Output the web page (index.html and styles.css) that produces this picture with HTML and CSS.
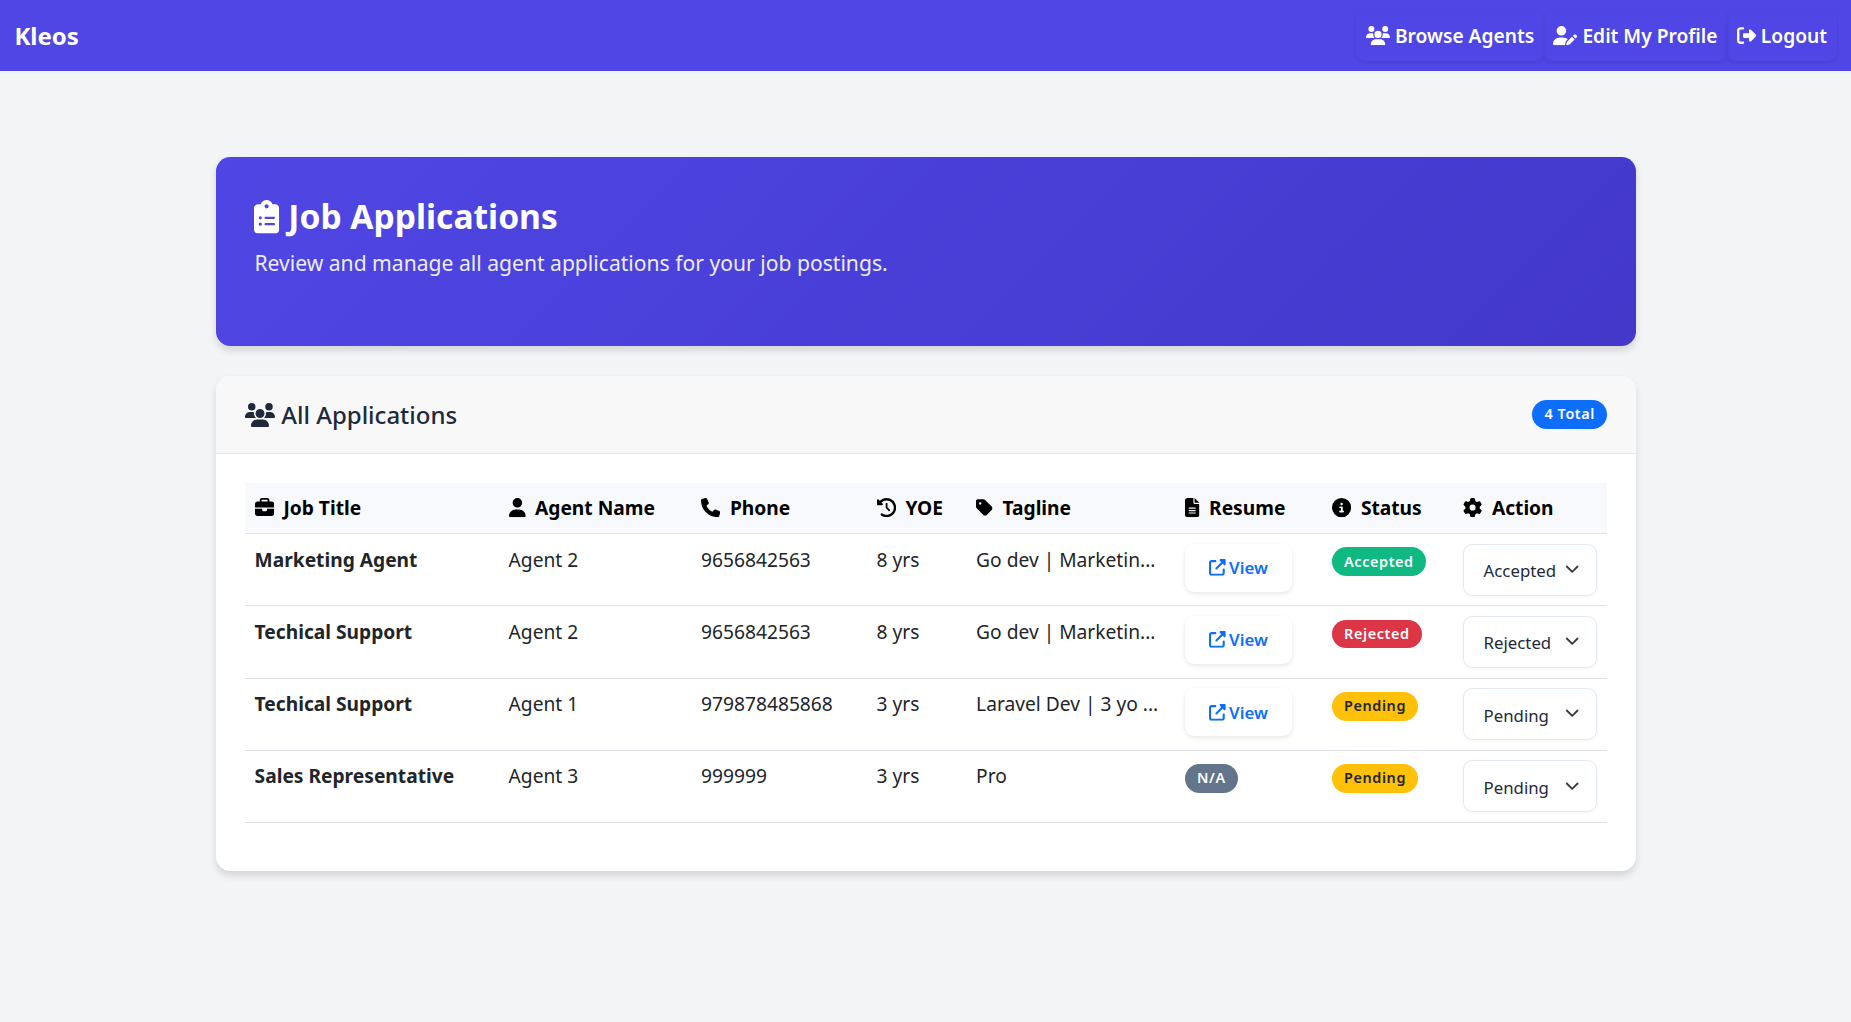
FILE: index.html
```html
<!DOCTYPE html>
<html lang="en">
<head>
<meta charset="utf-8">
<title>Kleos – Job Applications</title>
<link rel="stylesheet" href="styles.css">
</head>
<body>
<svg class="sprite" aria-hidden="true">
  <symbol id="users" viewBox="0 0 640 512"><path d="M144 0a80 80 0 1 1 0 160A80 80 0 1 1 144 0zM512 0a80 80 0 1 1 0 160A80 80 0 1 1 512 0zM0 298.700C0 239.800 47.800 192 106.700 192h42.700c15.900 0 31 3.500 44.600 9.700c-1.300 7.200-1.900 14.700-1.900 22.300c0 38.200 16.800 72.500 43.300 96c-.2 0-.4 0-.7 0H21.300C9.600 320 0 310.400 0 298.700zM405.300 320c-.2 0-.4 0-.7 0c26.600-23.500 43.300-57.800 43.300-96c0-7.600-.7-15-1.900-22.300c13.600-6.300 28.700-9.700 44.600-9.700h42.700C592.200 192 640 239.800 640 298.700c0 11.800-9.600 21.300-21.300 21.300H405.300zM224 224a96 96 0 1 1 192 0 96 96 0 1 1 -192 0zM128 485.300C128 411.700 187.700 352 261.300 352H378.700C452.300 352 512 411.700 512 485.300c0 14.700-11.900 26.700-26.700 26.700H154.700c-14.700 0-26.700-11.900-26.700-26.700z"/></symbol>
  <symbol id="user-pen" viewBox="0 0 640 512"><path d="M224 256A128 128 0 1 0 224 0a128 128 0 1 0 0 256zm-45.700 48C79.800 304 0 383.800 0 482.300C0 498.700 13.300 512 29.700 512H322.800c-3.100-8.800-3.700-18.400-1.400-27.800l15-60.100c2.800-11.300 8.600-21.500 16.800-29.700l40.300-40.300c-32.100-31-75.700-50.100-123.900-50.100H178.300zm435.500-68.300c-15.600-15.600-40.900-15.600-56.600 0l-29.400 29.400 71 71 29.400-29.400c15.600-15.600 15.600-40.900 0-56.600l-14.400-14.400zM375.900 417c-4.100 4.100-7 9.200-8.400 14.900l-15 60.100c-1.400 5.500 .2 11.200 4.200 15.200s9.700 5.600 15.200 4.200l60.100-15c5.600-1.400 10.800-4.300 14.900-8.400L576.100 358.700l-71-71L375.900 417z"/></symbol>
  <symbol id="logout" viewBox="0 0 512 512"><path d="M377.900 105.900L500.700 228.700c7.200 7.200 11.300 17.100 11.300 27.300s-4.100 20.100-11.300 27.300L377.900 406.100c-6.400 6.400-15 9.900-24 9.900c-18.700 0-33.900-15.200-33.900-33.900l0-62.100-128 0c-17.700 0-32-14.300-32-32l0-64c0-17.700 14.300-32 32-32l128 0 0-62.100c0-18.700 15.200-33.900 33.900-33.900c9 0 17.600 3.600 24 9.900zM160 96L96 96c-17.700 0-32 14.300-32 32l0 256c0 17.700 14.300 32 32 32l64 0c17.700 0 32 14.300 32 32s-14.300 32-32 32l-64 0c-53 0-96-43-96-96L0 128C0 75 43 32 96 32l64 0c17.700 0 32 14.300 32 32s-14.300 32-32 32z"/></symbol>
  <symbol id="clipboard" viewBox="0 0 384 512"><path d="M192 0c-41.800 0-77.400 26.700-90.500 64H64C28.700 64 0 92.700 0 128V448c0 35.300 28.700 64 64 64H320c35.300 0 64-28.700 64-64V128c0-35.300-28.700-64-64-64H282.500C269.400 26.700 233.800 0 192 0zm0 64a32 32 0 1 1 0 64 32 32 0 1 1 0-64zM72 272a24 24 0 1 1 48 0 24 24 0 1 1 -48 0zm104-16H304c8.800 0 16 7.200 16 16s-7.200 16-16 16H176c-8.800 0-16-7.200-16-16s7.200-16 16-16zM72 368a24 24 0 1 1 48 0 24 24 0 1 1 -48 0zm88 0c0-8.800 7.200-16 16-16H304c8.800 0 16 7.200 16 16s-7.200 16-16 16H176c-8.800 0-16-7.200-16-16z"/></symbol>
  <symbol id="briefcase" viewBox="0 0 512 512"><path d="M184 48H328c4.400 0 8 3.600 8 8V96H176V56c0-4.400 3.600-8 8-8zm-56 8V96H64C28.700 96 0 124.700 0 160v96H192 320 512V160c0-35.300-28.700-64-64-64H384V56c0-30.900-25.100-56-56-56H184c-30.900 0-56 25.100-56 56zM512 288H320v32c0 17.700-14.300 32-32 32H224c-17.700 0-32-14.300-32-32V288H0V416c0 35.300 28.700 64 64 64H448c35.300 0 64-28.700 64-64V288z"/></symbol>
  <symbol id="user" viewBox="0 0 448 512"><path d="M224 256A128 128 0 1 0 224 0a128 128 0 1 0 0 256zm-45.700 48C79.800 304 0 383.800 0 482.300C0 498.700 13.300 512 29.700 512H418.300c16.400 0 29.700-13.300 29.700-29.700C448 383.800 368.200 304 269.700 304H178.300z"/></symbol>
  <symbol id="phone" viewBox="0 0 512 512"><path d="M164.900 24.600c-7.700-18.600-28-28.500-47.400-23.200l-88 24C12.100 30.200 0 46 0 64C0 311.400 200.600 512 448 512c18 0 33.800-12.100 38.600-29.500l24-88c5.300-19.400-4.600-39.700-23.200-47.400l-96-40c-16.300-6.800-35.200-2.100-46.300 11.600L304.700 368C234.300 334.700 177.300 277.700 144 207.300L193.300 167c13.700-11.200 18.400-30 11.600-46.300l-40-96z"/></symbol>
  <symbol id="history" viewBox="0 0 512 512"><path d="M75 75L41 41C25.900 25.900 0 36.600 0 57.900V168c0 13.300 10.700 24 24 24H134.100c21.400 0 32.100-25.900 17-41l-30.800-30.800C155 85.500 203 64 256 64c106 0 192 86 192 192s-86 192-192 192c-40.800 0-78.600-12.700-109.700-34.400c-14.500-10.100-34.400-6.600-44.600 7.900s-6.600 34.400 7.900 44.600C151.200 495 201.700 512 256 512c141.400 0 256-114.600 256-256S397.400 0 256 0C185.300 0 121.300 28.700 75 75zm181 53c-13.300 0-24 10.700-24 24V256c0 6.400 2.500 12.500 7 17l72 72c9.400 9.400 24.600 9.400 33.900 0s9.400-24.600 0-33.900l-65-65V152c0-13.300-10.700-24-24-24z"/></symbol>
  <symbol id="tag" viewBox="0 0 448 512"><path d="M0 80V229.500c0 17 6.700 33.300 18.700 45.300l176 176c25 25 65.500 25 90.500 0L418.700 317.300c25-25 25-65.500 0-90.500l-176-176c-12-12-28.300-18.700-45.300-18.700H48C21.500 32 0 53.500 0 80zm112 32a32 32 0 1 1 0 64 32 32 0 1 1 0-64z"/></symbol>
  <symbol id="file" viewBox="0 0 384 512"><path d="M64 0C28.700 0 0 28.700 0 64V448c0 35.300 28.700 64 64 64H320c35.300 0 64-28.700 64-64V160H256c-17.700 0-32-14.300-32-32V0H64zM256 0V128H384L256 0zM112 256H272c8.800 0 16 7.200 16 16s-7.200 16-16 16H112c-8.800 0-16-7.200-16-16s7.200-16 16-16zm0 64H272c8.800 0 16 7.200 16 16s-7.200 16-16 16H112c-8.800 0-16-7.200-16-16s7.200-16 16-16zm0 64H272c8.800 0 16 7.200 16 16s-7.200 16-16 16H112c-8.800 0-16-7.200-16-16s7.200-16 16-16z"/></symbol>
  <symbol id="info" viewBox="0 0 512 512"><path d="M256 512A256 256 0 1 0 256 0a256 256 0 1 0 0 512zM216 336h24V272H216c-13.300 0-24-10.700-24-24s10.700-24 24-24h48c13.300 0 24 10.700 24 24v88h8c13.300 0 24 10.700 24 24s-10.700 24-24 24H216c-13.300 0-24-10.700-24-24s10.700-24 24-24zm40-208a32 32 0 1 1 0 64 32 32 0 1 1 0-64z"/></symbol>
  <symbol id="gear" viewBox="0 0 512 512"><path d="M495.900 166.600c3.200 8.700 .5 18.400-6.400 24.600l-43.300 39.400c1.100 8.300 1.700 16.800 1.700 25.400s-.6 17.100-1.700 25.400l43.300 39.400c6.900 6.200 9.600 15.900 6.400 24.600c-4.400 11.900-9.700 23.300-15.800 34.300l-4.700 8.100c-6.600 11-14 21.400-22.100 31.200c-5.900 7.200-15.700 9.600-24.500 6.800l-55.700-17.700c-13.400 10.300-28.200 18.900-44 25.400l-12.500 57.100c-2 9.100-9 16.300-18.200 17.800c-13.800 2.300-28 3.500-42.500 3.500s-28.700-1.200-42.500-3.500c-9.200-1.500-16.200-8.700-18.200-17.800l-12.500-57.100c-15.800-6.500-30.600-15.100-44-25.400L83.100 425.900c-8.800 2.800-18.600 .3-24.500-6.800c-8.100-9.800-15.500-20.200-22.100-31.200l-4.700-8.100c-6.100-11-11.400-22.400-15.800-34.300c-3.200-8.700-.5-18.400 6.400-24.600l43.300-39.400C64.600 273.100 64 264.600 64 256s.6-17.100 1.700-25.400L22.400 191.200c-6.900-6.200-9.600-15.900-6.400-24.600c4.400-11.900 9.700-23.300 15.800-34.300l4.700-8.100c6.600-11 14-21.400 22.100-31.200c5.900-7.200 15.700-9.600 24.500-6.800l55.700 17.700c13.400-10.300 28.200-18.900 44-25.400l12.500-57.100c2-9.100 9-16.300 18.200-17.800C227.300 1.200 241.500 0 256 0s28.700 1.200 42.500 3.500c9.200 1.500 16.200 8.700 18.200 17.800l12.500 57.100c15.800 6.500 30.600 15.100 44 25.400l55.700-17.700c8.800-2.800 18.600-.3 24.500 6.800c8.100 9.800 15.500 20.200 22.100 31.200l4.700 8.100c6.100 11 11.400 22.400 15.800 34.300zM256 336a80 80 0 1 0 0-160 80 80 0 1 0 0 160z"/></symbol>
  <symbol id="external" viewBox="0 0 512 512"><path d="M352 0c-12.900 0-24.600 7.800-29.600 19.800s-2.200 25.700 6.900 34.900L370.700 96 201.400 265.400c-12.500 12.500-12.500 32.800 0 45.300s32.800 12.500 45.300 0L416 141.300l41.400 41.400c9.200 9.200 22.900 11.900 34.900 6.900s19.800-16.600 19.800-29.600V32c0-17.700-14.300-32-32-32H352zM80 32C35.800 32 0 67.800 0 112V432c0 44.200 35.800 80 80 80H400c44.200 0 80-35.800 80-80V320c0-17.700-14.300-32-32-32s-32 14.300-32 32V432c0 8.800-7.200 16-16 16H80c-8.800 0-16-7.200-16-16V112c0-8.800 7.200-16 16-16H192c17.700 0 32-14.300 32-32s-14.300-32-32-32H80z"/></symbol>
  <symbol id="chevron" viewBox="0 0 16 16"><path fill="none" stroke="#343a40" stroke-linecap="round" stroke-linejoin="round" stroke-width="2" d="m2 5 6 6 6-6"/></symbol>
</svg>

<nav class="navbar">
  <a class="brand">Kleos</a>
  <div class="nav-links">
    <a class="nav-btn"><svg class="icon w-640"><use href="#users"/></svg> Browse Agents</a>
    <a class="nav-btn"><svg class="icon w-640"><use href="#user-pen"/></svg> Edit My Profile</a>
    <a class="nav-btn"><svg class="icon"><use href="#logout"/></svg> Logout</a>
  </div>
</nav>

<main class="container">
  <section class="hero">
    <h1><svg class="icon w-384"><use href="#clipboard"/></svg> Job Applications</h1>
    <p>Review and manage all agent applications for your job postings.</p>
  </section>

  <section class="card">
    <header class="card-header">
      <h2><svg class="icon w-640"><use href="#users"/></svg> All Applications</h2>
      <span class="badge badge-primary">4 Total</span>
    </header>
    <div class="card-body">
      <table class="table">
        <colgroup>
          <col class="c-job"><col class="c-agent"><col class="c-phone"><col class="c-yoe"><col class="c-tag"><col class="c-resume"><col class="c-status"><col class="c-action">
        </colgroup>
        <thead>
          <tr>
            <th><svg class="icon"><use href="#briefcase"/></svg>Job Title</th>
            <th><svg class="icon w-448"><use href="#user"/></svg>Agent Name</th>
            <th><svg class="icon"><use href="#phone"/></svg>Phone</th>
            <th><svg class="icon"><use href="#history"/></svg>YOE</th>
            <th><svg class="icon w-448"><use href="#tag"/></svg>Tagline</th>
            <th><svg class="icon w-384"><use href="#file"/></svg>Resume</th>
            <th><svg class="icon"><use href="#info"/></svg>Status</th>
            <th><svg class="icon"><use href="#gear"/></svg>Action</th>
          </tr>
        </thead>
        <tbody>
          <tr>
            <td class="job">Marketing Agent</td><td>Agent 2</td><td>9656842563</td><td>8 yrs</td><td>Go dev | Marketin...</td>
            <td><a class="view-btn"><svg class="icon"><use href="#external"/></svg> View</a></td>
            <td><span class="badge badge-success">Accepted</span></td>
            <td><div class="select">Accepted<svg class="chevron"><use href="#chevron"/></svg></div></td>
          </tr>
          <tr>
            <td class="job">Techical Support</td><td>Agent 2</td><td>9656842563</td><td>8 yrs</td><td>Go dev | Marketin...</td>
            <td><a class="view-btn"><svg class="icon"><use href="#external"/></svg> View</a></td>
            <td><span class="badge badge-danger">Rejected</span></td>
            <td><div class="select">Rejected<svg class="chevron"><use href="#chevron"/></svg></div></td>
          </tr>
          <tr>
            <td class="job">Techical Support</td><td>Agent 1</td><td>979878485868</td><td>3 yrs</td><td>Laravel Dev | 3 yo ...</td>
            <td><a class="view-btn"><svg class="icon"><use href="#external"/></svg> View</a></td>
            <td><span class="badge badge-warning">Pending</span></td>
            <td><div class="select">Pending<svg class="chevron"><use href="#chevron"/></svg></div></td>
          </tr>
          <tr>
            <td class="job">Sales Representative</td><td>Agent 3</td><td>999999</td><td>3 yrs</td><td>Pro</td>
            <td><span class="badge badge-secondary">N/A</span></td>
            <td><span class="badge badge-warning">Pending</span></td>
            <td><div class="select">Pending<svg class="chevron"><use href="#chevron"/></svg></div></td>
          </tr>
        </tbody>
      </table>
    </div>
  </section>
</main>
</body>
</html>
```
FILE: styles.css
```css
*, *::before, *::after { box-sizing: border-box; }

body {
  margin: 0;
  min-height: 1022px;
  background: #f3f4f6;
  color: #212529;
  font: 400 19.2px/1.5 "Noto Sans", sans-serif;
}

.sprite { display: none; }

.icon {
  width: 1em;
  height: 1em;
  fill: currentColor;
  vertical-align: -0.125em;
  overflow: visible;
}
.w-640 { width: 1.25em; }
.w-448 { width: 0.875em; }
.w-384 { width: 0.75em; }

.navbar {
  display: flex;
  align-items: center;
  justify-content: space-between;
  height: 71px;
  padding: 0 14.4px;
  background: #4f46e5;
  color: #fff;
}
.brand { font-size: 24px; font-weight: 700; }
.nav-links { display: flex; }
.nav-btn {
  padding: 11.8px 9.6px 9.8px;
  border-radius: 9.6px;
  font-weight: 600;
  box-shadow: 0 2px 5px rgba(0, 0, 0, 0.08);
}

.container {
  width: 1420px;
  margin: 86px 0 0 216px;
}

.hero {
  height: 189px;
  padding: 39.4px 38.4px;
  border-radius: 14.4px;
  background: linear-gradient(135deg, #4f46e5, #4338ca);
  color: #fff;
  box-shadow: 0 4.8px 7.2px rgba(0, 0, 0, 0.12);
}
.hero h1 { margin: 0 0 9.6px; font-size: 33.6px; font-weight: 700; line-height: 1.2; }
.hero p { margin: 0; font-size: 21.12px; line-height: 33px; opacity: 0.9; }

.card {
  height: 495px;
  margin-top: 30px;
  border-radius: 14.4px;
  background: #fff;
  overflow: hidden;
  box-shadow: 0 4.8px 7.2px rgba(0, 0, 0, 0.12);
}
.card-header {
  display: flex;
  align-items: center;
  justify-content: space-between;
  height: 78px;
  padding: 0 29px;
  border-bottom: 1px solid #e2e8f0;
  background: #f8f8f8;
  color: #1e293b;
}
.card-header h2 { margin: 0; padding-top: 2px; font-size: 24px; font-weight: 500; line-height: 1.2; }
.card-body { padding: 29px; }

.table {
  width: 1362px;
  border-collapse: separate;
  border-spacing: 0;
  table-layout: fixed;
}
.c-job { width: 254px; }
.c-agent { width: 192.500px; }
.c-phone { width: 175.500px; }
.c-yoe { width: 99.500px; }
.c-tag { width: 209px; }
.c-resume { width: 147px; }
.c-status { width: 131px; }
.c-action { width: 153.500px; }

th, td {
  padding: 9.6px 0 9.6px 9.6px;
  border-bottom: 1px solid #dee2e6;
  text-align: left;
  vertical-align: top;
  white-space: nowrap;
}
th { height: 51px; padding-top: 10.5px; background: #f8f9fc; color: #000; font-weight: 700; }
th .icon { margin-right: 9.6px; }
td { height: 72.250px; line-height: 31px; }
.job { font-weight: 700; }

.badge {
  display: inline-block;
  padding: 7.2px 12px;
  border-radius: 24px;
  color: #fff;
  font-size: 14.4px;
  font-weight: 600;
  line-height: 1;
  letter-spacing: 0.6px;
}
.badge-primary { background: #0d6efd; }
.badge-success { background: #10b981; }
.badge-danger { background: #dc3545; }
.badge-warning { background: #ffc107; color: #212529; }
.badge-secondary { background: #64748b; }

.view-btn {
  display: flex;
  align-items: center;
  justify-content: center;
  gap: 3px;
  width: 107px;
  height: 48px;
  border-radius: 9.6px;
  color: #0d6efd;
  font-size: 16.8px;
  font-weight: 600;
  box-shadow: 0 2px 5px rgba(0, 0, 0, 0.1);
}

.select {
  display: flex;
  align-items: center;
  justify-content: space-between;
  width: 134px;
  height: 52px;
  padding: 2px 17px 0 19.500px;
  border: 1px solid #e2e8f0;
  border-radius: 9.6px;
  color: #1e293b;
  font-size: 16.8px;
  box-shadow: 0 1px 3px rgba(0, 0, 0, 0.05);
}
.chevron { width: 14.4px; height: 14.4px; margin-top: -3px; }
```
